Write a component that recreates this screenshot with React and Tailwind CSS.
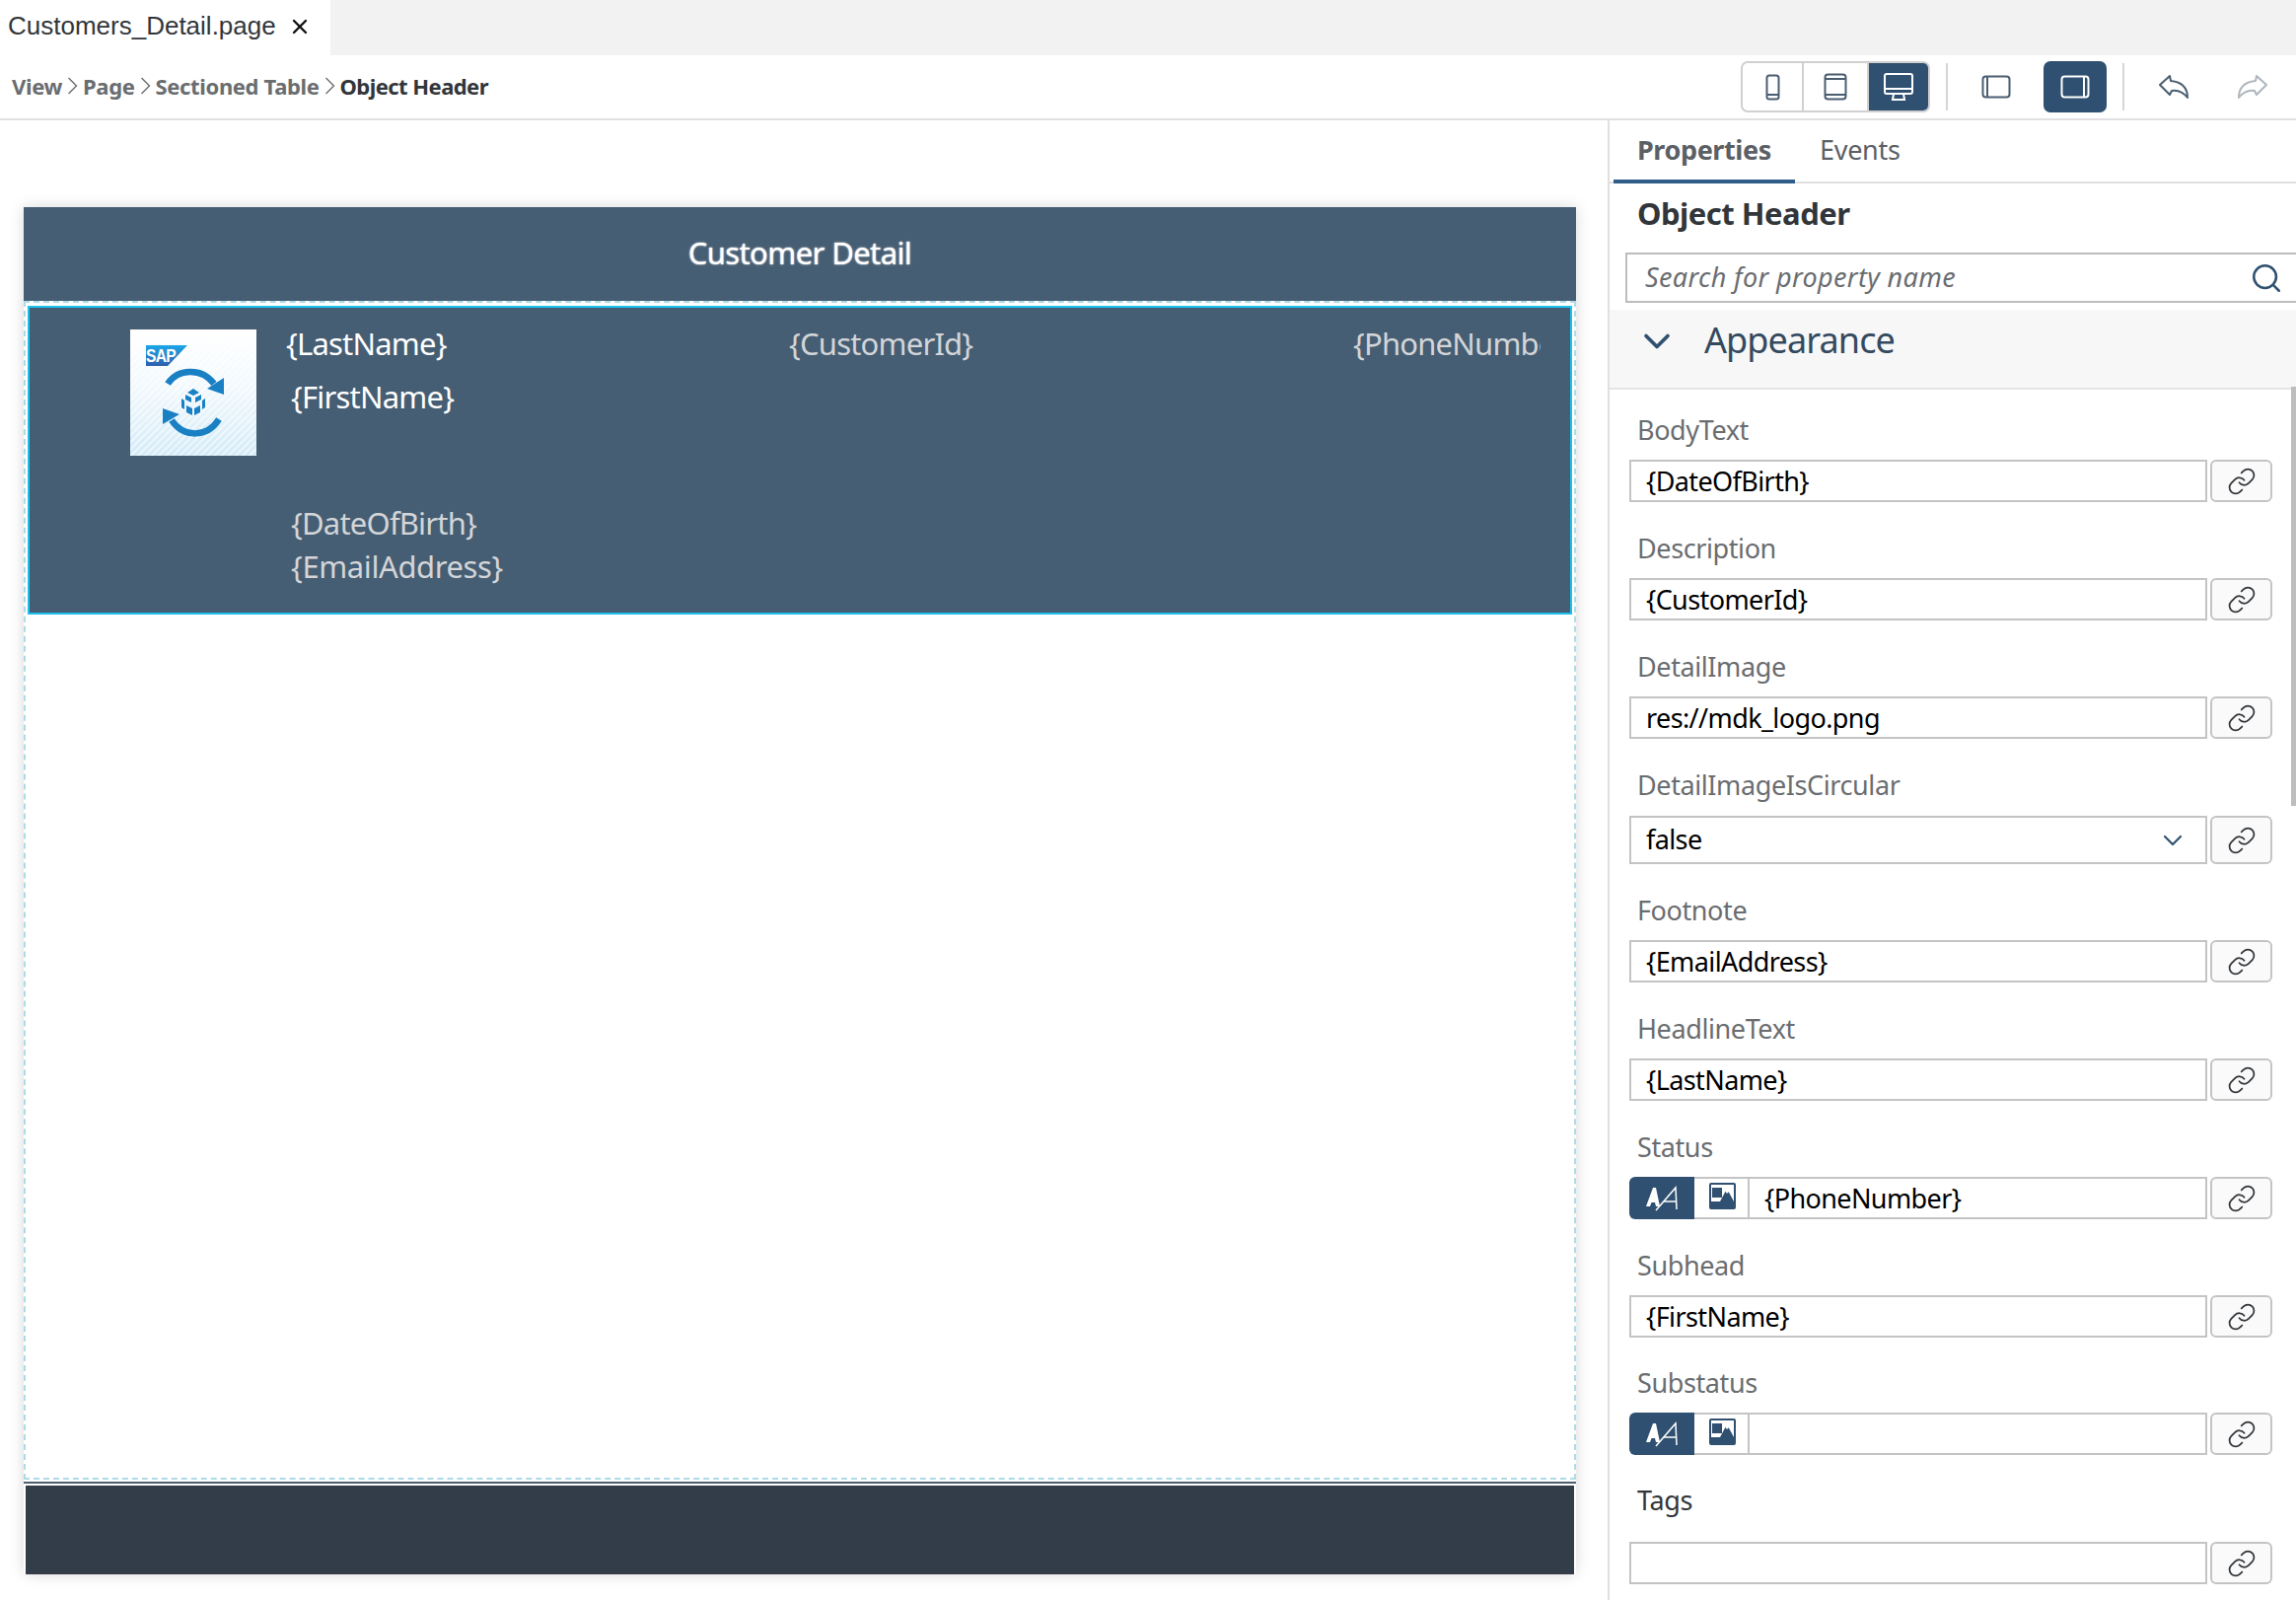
import React from 'react';
import { ChevronDown, Link, Search, X } from 'lucide-react';

const font = 'font-["Noto_Sans",sans-serif]';

const PhoneIcon = () => (
  <svg width="15" height="27" viewBox="0 0 15 27" fill="none" stroke="#4a5d70" strokeWidth="2">
    <rect x="1.5" y="1.5" width="12" height="24" rx="2.5" />
    <path d="M1.5 21h12" />
  </svg>
);

const TabletIcon = () => (
  <svg width="24" height="28" viewBox="0 0 24 28" fill="none" stroke="#4a5d70" strokeWidth="2">
    <rect x="1.5" y="1.5" width="21" height="25" rx="3" />
    <path d="M1.5 6h21M1.5 22h21" />
  </svg>
);

const MonitorIcon = () => (
  <svg width="30" height="28" viewBox="0 0 30 28" fill="none" stroke="#fff" strokeWidth="2">
    <rect x="1" y="1" width="28" height="20" rx="2" />
    <path d="M1 16h28M10 21l-1 6h12l-1-6M8 27h14" />
  </svg>
);

const PanelIcon = ({ right, color }) => (
  <svg width="30" height="24" viewBox="0 0 30 24" fill="none" stroke={color} strokeWidth="2">
    <rect x="1.5" y="1.5" width="27" height="21" rx="3" />
    <path d={right ? 'M24 1.5v21' : 'M6 1.5v21'} />
  </svg>
);

const UndoIcon = ({ color, flip }) => (
  <svg width="32" height="26" viewBox="0 0 32 26" fill="none" stroke={color} strokeWidth="2" strokeLinejoin="round" strokeLinecap="round" className={flip ? '-scale-x-100' : ''}>
    <path d="M2 11 L12 2 L13 7 C23 8 30 13 30 24 C26 19 20 16 14 17 L12 21 Z" />
  </svg>
);

const TextModeIcon = () => (
  <svg width="36" height="28" viewBox="0 0 36 28" fill="none">
    <path d="M2 22 L9 3 H12 L16 22 H12 L11 18 H7.5 L6 22 Z" fill="#fff" />
    <path d="M12 26 L32 3 L33 25 M20 17 H33" stroke="#fff" strokeWidth="1.5" />
  </svg>
);

const ImageModeIcon = () => (
  <svg width="27" height="27" viewBox="0 0 27 27">
    <rect width="27" height="27" rx="2" fill="#2f5070" />
    <rect x="2" y="2" width="23" height="17" fill="#fff" />
    <rect x="3" y="5" width="10" height="10" fill="#2f5070" />
    <path d="M11 19 L18 6 L25 19 Z" fill="#2f5070" />
    <path d="M15 7 L18 2 L22 7 L18 11 Z" fill="#fff" />
  </svg>
);

const MdkLogo = () => (
  <svg width="128" height="128" viewBox="0 0 128 128" className="mt-[6px] shrink-0">
    <defs>
      <linearGradient id="bgFade" x1="0" y1="0" x2="0" y2="1">
        <stop offset="0" stopColor="#ffffff" />
        <stop offset="0.45" stopColor="#f2f9fd" />
        <stop offset="1" stopColor="#d3ebf8" />
      </linearGradient>
      <linearGradient id="sapFade" x1="0" y1="0" x2="0" y2="1">
        <stop offset="0" stopColor="#1ca6e8" />
        <stop offset="1" stopColor="#2d5fae" />
      </linearGradient>
      <pattern id="stripes" width="5" height="5" patternUnits="userSpaceOnUse" patternTransform="rotate(45)">
        <rect width="2" height="5" fill="#ffffff" opacity="0.55" />
      </pattern>
    </defs>
    <rect width="128" height="128" fill="url(#bgFade)" />
    <rect width="128" height="128" fill="url(#stripes)" />
    <polygon points="16,16 58,16 38,37 16,37" fill="url(#sapFade)" />
    <text x="16" y="33" fontFamily="Liberation Sans, sans-serif" fontWeight="700" fontSize="18" textLength="30" lengthAdjust="spacingAndGlyphs" fill="#fff">SAP</text>
    <g fill="none" stroke="#1a80c4" strokeWidth="6.5">
      <path d="M38 55 C48 40 72 38 85 55" />
      <path d="M90 91 C78 110 54 110 42 92" />
    </g>
    <polygon points="95,49 95,66 78,60" fill="#1a80c4" />
    <polygon points="33,80 33,96 50,86" fill="#1a80c4" />
    <g fill="#1a80c4">
      <polygon points="64,60 70,64 64,67 58,64" />
      <polygon points="56,66 62,69 62,74 56,71" />
      <polygon points="72,66 66,69 66,74 72,71" />
      <polygon points="52,70 55,72 55,81 52,79" />
      <polygon points="76,70 73,72 73,81 76,79" />
      <polygon points="57,77 63,80 63,87 57,84" />
      <polygon points="71,77 65,80 65,87 71,84" />
    </g>
  </svg>
);

const LinkButton = ({ h = 'h-[43px]' }) => (
  <button className={`ml-[3px] flex w-[63px] ${h} shrink-0 items-center justify-center rounded-[6px] border-2 border-[#c4c4c4] bg-[#fafafa]`}>
    <Link size={30} strokeWidth={1.4} color="#32363a" />
  </button>
);

const Field = ({ label, value, mode, select, top = 'mt-[31px]', gap = 'mt-[12px]', dark }) => (
  <div className={top}>
    <div className={`ml-[8px] h-[34px] text-[27px] leading-[32px] tracking-[-0.4px] ${dark ? 'text-[#32363a]' : 'text-[#6a6d70]'}`}>{label}</div>
    <div className={`${gap} flex`}>
      {mode && (
        <div className="flex h-[43px] shrink-0">
          <div className="flex w-[66px] items-center justify-center rounded-l-[6px] bg-[#2f5070]"><TextModeIcon /></div>
          <div className="flex w-[54px] items-center justify-center border-y-2 border-[#c4c4c4] pb-[4px] pl-[2px]"><ImageModeIcon /></div>
        </div>
      )}
      {select ? (
        <div className="flex h-[49px] w-[586px] items-center justify-between border-2 border-[#c4c4c4] pl-[15px] pr-[17px] text-[27px] tracking-[-0.6px] text-black">
          {value}
          <ChevronDown size={32} strokeWidth={1.6} color="#2f5070" />
        </div>
      ) : (
        <div className="flex h-[43px] min-w-0 flex-1 items-center border-2 border-[#c4c4c4] pl-[15px] pt-[2px] text-[27px] tracking-[-0.6px] text-black">{value}</div>
      )}
      <LinkButton h={select ? 'h-[49px]' : 'h-[43px]'} />
    </div>
  </div>
);

function Crumb() {
  return (
    <svg width="11" height="20" viewBox="0 0 11 20" fill="none" stroke="#6a6d70" strokeWidth="1.4">
      <path d="M1.5 2l8 8-8 8" />
    </svg>
  );
}

export default function App() {
  return (
    <div className={`flex h-[1622px] w-[2328px] flex-col overflow-hidden bg-white ${font}`}>
      {/* pestañas */}
      <div className="flex h-[56px] shrink-0 bg-[#f2f2f2]">
        <div className="flex w-[335px] items-center bg-white pb-[3px] pl-[8px] font-['Liberation_Sans',sans-serif] text-[26px] text-[#32363a]">
          Customers_Detail.page
          <X size={24} strokeWidth={2.4} color="#111" className="ml-[12px]" />
        </div>
      </div>

      {/* toolbar */}
      <div className="flex h-[66px] shrink-0 items-center border-b-2 border-[#e0e0e3] pb-[2px]">
        <div className="ml-[12px] flex items-center gap-[5px] text-[22px] font-bold tracking-[-0.35px] text-[#6a6d70]">
          <span>View</span><Crumb /><span>Page</span><Crumb /><span>Sectioned Table</span><Crumb /><span className="tracking-[-0.55px] text-[#32363a]">Object Header</span>
        </div>
        <div className="ml-auto mt-[2px] flex items-center">
          <div className="flex h-[52px] w-[192px] overflow-hidden rounded-[7px] border-2 border-[#d0d0d0]">
            <div className="flex w-[62px] items-center justify-center border-r-2 border-[#d0d0d0]"><PhoneIcon /></div>
            <div className="flex w-[64px] items-center justify-center"><TabletIcon /></div>
            <div className="flex flex-1 items-center justify-center border-l-2 border-[#d0d0d0] bg-[#2f5070]"><MonitorIcon /></div>
          </div>
          <div className="ml-[16px] h-[48px] w-[2px] bg-[#d5d5da]" />
          <div className="ml-[34px]"><PanelIcon color="#4a5d70" /></div>
          <div className="ml-[33px] flex h-[52px] w-[64px] items-center justify-center rounded-[7px] bg-[#2f5070]"><PanelIcon right color="#fff" /></div>
          <div className="ml-[16px] h-[48px] w-[2px] bg-[#d5d5da]" />
          <div className="ml-[34px]"><UndoIcon color="#4a5d70" /></div>
          <div className="ml-[48px] mr-[28px]"><UndoIcon flip color="#aeb6bd" /></div>
        </div>
      </div>

      <div className="flex min-h-0 flex-1">
        {/* canvas */}
        <div className="w-[1630px] shrink-0 px-[24px] pt-[88px]">
          <div className="w-[1574px] bg-white shadow-[0_0_14px_rgba(0,0,0,0.15)]">
            <div className="flex h-[95px] items-center justify-center bg-[#465e73] pb-[2px] text-[31px] tracking-[-0.6px] text-white [text-shadow:0_0_2px_#fff]">Customer Detail</div>
            <div className="h-[1195px] border-2 border-dashed border-[#aedbe8] px-[2px] pt-[3px]">
              <div className="flex h-[313px] border-2 border-[#1cc0ec] bg-[#465e73] pl-[102px] pt-[16px] text-[31px] tracking-[-0.8px]">
                <MdkLogo />
                <div className="ml-[30px] w-[510px] shrink-0">
                  <div className="h-[40px] leading-[40px] text-white">{'{LastName}'}</div>
                  <div className="ml-[5px] mt-[14px] h-[40px] leading-[40px] text-white">{'{FirstName}'}</div>
                  <div className="ml-[5px] mt-[86px] leading-[44px] text-[#d3d5d8]">{'{DateOfBirth}'}</div>
                  <div className="ml-[5px] leading-[44px] tracking-[-0.4px] text-[#d3d5d8]">{'{EmailAddress}'}</div>
                </div>
                <div className="w-[572px] shrink-0 leading-[40px] text-[#d3d5d8]">{'{CustomerId}'}</div>
                <div className="h-[40px] w-[190px] shrink-0 overflow-hidden whitespace-nowrap leading-[40px] text-[#d3d5d8]">{'{PhoneNumber}'}</div>
              </div>
            </div>
            <div className="mt-[2px] h-[2px] bg-[#4a5f70]" />
            <div className="mx-[2px] mt-[2px] h-[90px] bg-[#323d49]" />
          </div>
        </div>

        {/* propiedades */}
        <div className="relative min-w-0 flex-1 overflow-hidden border-l-2 border-[#e0e0e3]">
          <div className="flex h-[64px] items-end border-b-2 border-[#e0e0e3]">
            <div className="-mb-[2px] ml-[4px] h-[64px] w-[184px] border-b-4 border-[#2f5d8a] pl-[24px] text-[27px] font-bold leading-[60px] tracking-[-0.4px] text-[#5b6066]">Properties</div>
            <div className="-mb-[2px] ml-[25px] h-[64px] text-[27px] leading-[60px] tracking-[-0.3px] text-[#5b6066]">Events</div>
          </div>
          <div className="ml-[28px] mt-[11px] h-[40px] text-[31px] font-bold leading-[38px] tracking-[-0.5px] text-[#32363a]">Object Header</div>
          <div className="-mr-[10px] ml-[16px] mt-[19px] flex h-[51px] items-center border-2 border-[#bdbdbd] pl-[18px] pr-[21px] text-[27px] italic tracking-[0.35px] text-[#6a6d70]">
            Search for property name
            <Search size={34} strokeWidth={1.8} color="#2f5070" className="ml-auto" />
          </div>
          <div className="mt-[7px] flex h-[81px] border-b-2 border-[#e5e5e5] bg-[#f7f7f7]">
            <ChevronDown size={44} strokeWidth={2} color="#2f5070" className="ml-[26px] mt-[10px]" />
            <div className="ml-[26px] mt-[6px] text-[36px] leading-[50px] tracking-[-0.9px] text-[#354a5f]">Appearance</div>
          </div>
          <div className="absolute right-0 top-[270px] h-[425px] w-[5px] bg-[#bdbdbd]" />
          <div className="pl-[20px] pr-[24px]">
            <Field top="mt-[25px]" label="BodyText" value="{DateOfBirth}" />
            <Field label="Description" value="{CustomerId}" />
            <Field label="DetailImage" value="res://mdk_logo.png" />
            <Field label="DetailImageIsCircular" value="false" select gap="mt-[13px]" />
            <Field label="Footnote" value="{EmailAddress}" />
            <Field label="HeadlineText" value="{LastName}" />
            <Field label="Status" value="{PhoneNumber}" mode />
            <Field label="Subhead" value="{FirstName}" />
            <Field top="mt-[30px]" label="Substatus" mode />
            <Field top="mt-[30px]" gap="mt-[24px]" label="Tags" dark />
          </div>
        </div>
      </div>
    </div>
  );
}
